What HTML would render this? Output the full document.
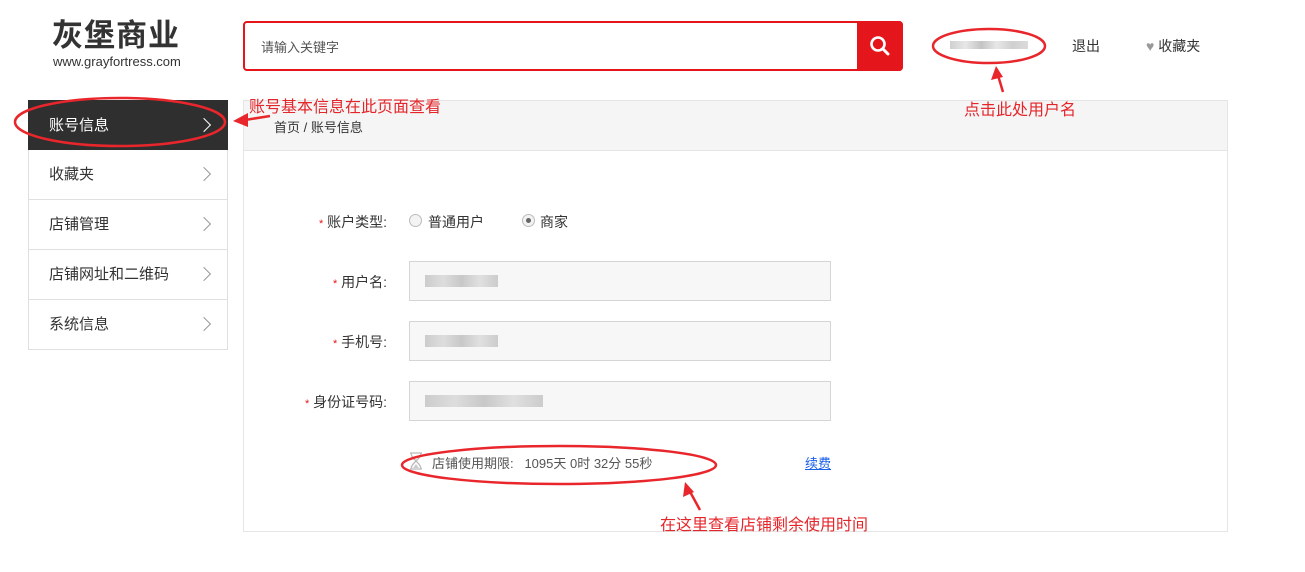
<!DOCTYPE html>
<html><head><meta charset="utf-8"><style>
*{margin:0;padding:0;box-sizing:border-box}
body{width:1305px;height:572px;background:#fff;font-family:"Liberation Sans","Noto Sans CJK SC",sans-serif;position:relative;overflow:hidden;color:#333}
.a{position:absolute}
.logo{left:52px;top:14px;font-size:31px;font-weight:bold;color:#333;letter-spacing:1px;line-height:44px}
.url{left:53px;top:54px;font-size:13px;color:#333}
.search{left:243px;top:21px;width:660px;height:50px;border:2px solid #e4161b;border-radius:4px}
.sbtn{left:857px;top:21px;width:46px;height:50px;background:#e4161b;border-radius:0 4px 4px 0}
.side{left:28px;top:100px;width:200px}
.side div{height:50px;border:1px solid #e0e0e0;border-top:none;font-size:15px;line-height:49px;padding-left:20px;position:relative;color:#333}
.side div:first-child{background:#2f2f2f;color:#fff;border-color:#2f2f2f}
.side div::after{content:"";position:absolute;right:18px;top:19px;width:9px;height:9px;border-right:1.5px solid #999;border-top:1.5px solid #999;transform:rotate(45deg)}
.side div:first-child::after{border-color:#fff}
.main{left:243px;top:100px;width:985px;height:432px;border:1px solid #e5e5e5}
.bc{height:50px;background:#f5f5f5;border-bottom:1px solid #e5e5e5;font-size:13px;padding:16px 0 0 30px}
.lbl{font-size:14px;text-align:right;width:120px;left:267px}
.lbl b{color:#e4161b;font-weight:normal;font-size:11px}
.inp{left:409px;width:422px;height:40px;background:#f7f7f7;border:1px solid #d5d5d5}
.blur{position:absolute;left:15px;top:13px;height:12px;background:linear-gradient(90deg,#ccc,#ddd,#c8c8c8,#e0e0e0,#ccc)}
.red{color:#e4262b;font-size:16px}
</style></head><body>
<div class="a logo">灰堡商业</div>
<div class="a url">www.grayfortress.com</div>
<div class="a search"><span style="position:absolute;left:16px;top:14px;font-size:13px;color:#555">请输入关键字</span></div>
<div class="a sbtn"><svg width="46" height="50"><circle cx="21" cy="23" r="6.5" fill="none" stroke="#fff" stroke-width="2.6"/><line x1="26" y1="28" x2="31" y2="33" stroke="#fff" stroke-width="3" stroke-linecap="round"/></svg></div>
<div class="a" style="left:950px;top:41px;width:78px;height:8px;background:linear-gradient(90deg,#bbb,#ddd,#aaa,#ddd,#bbb,#ccc);opacity:.7"></div>
<div class="a" style="left:1072px;top:36px;font-size:14px">退出</div>
<div class="a" style="left:1146px;top:36px;font-size:14px"><span style="color:#999">♥</span> 收藏夹</div>
<div class="a side"><div style="border-top:1px solid #2f2f2f">账号信息</div><div>收藏夹</div><div>店铺管理</div><div>店铺网址和二维码</div><div>系统信息</div></div>
<div class="a main"><div class="bc">首页 / 账号信息</div></div>
<div class="a lbl" style="top:212px"><b>*</b> 账户类型:</div>
<div class="a" style="left:409px;top:214px;width:13px;height:13px;border:1px solid #bbb;border-radius:50%;background:#f3f3f3"></div>
<div class="a" style="left:428px;top:212px;font-size:14px">普通用户</div>
<div class="a" style="left:522px;top:214px;width:13px;height:13px;border:1px solid #bbb;border-radius:50%;background:#f3f3f3"><div style="margin:3px;width:5px;height:5px;border-radius:50%;background:#666"></div></div>
<div class="a" style="left:540px;top:212px;font-size:14px">商家</div>
<div class="a lbl" style="top:272px"><b>*</b> 用户名:</div>
<div class="a inp" style="top:261px"><div class="blur" style="width:73px"></div></div>
<div class="a lbl" style="top:332px"><b>*</b> 手机号:</div>
<div class="a inp" style="top:321px"><div class="blur" style="width:73px"></div></div>
<div class="a lbl" style="top:392px"><b>*</b> 身份证号码:</div>
<div class="a inp" style="top:381px"><div class="blur" style="width:118px"></div></div>
<svg class="a" style="left:409px;top:452px" width="14" height="18"><path d="M1 1H13M1 17H13M2 1C2 7 12 11 12 17M12 1C12 7 2 11 2 17" fill="none" stroke="#bbb" stroke-width="1.3"/><path d="M4 16L7 12L10 16Z" fill="#ccc"/></svg>
<div class="a" style="left:432px;top:453px;font-size:13px;color:#555">店铺使用期限:&nbsp;&nbsp; 1095天 0时 32分 55秒</div>
<div class="a" style="left:805px;top:453px;font-size:13px;color:#1a5fe8;text-decoration:underline">续费</div>
<div class="a red" style="left:249px;top:93px">账号基本信息在此页面查看</div>
<div class="a red" style="left:964px;top:96px">点击此处用户名</div>
<div class="a red" style="left:660px;top:511px">在这里查看店铺剩余使用时间</div>
<svg class="a" style="left:0;top:0" width="1305" height="572">
<g fill="none" stroke="#e8262b" stroke-width="2.5">
<ellipse cx="120" cy="122" rx="105" ry="24"/>
<ellipse cx="989" cy="46" rx="56" ry="17"/>
<ellipse cx="559" cy="465" rx="157" ry="19"/>
<line x1="245" y1="120" x2="270" y2="116"/>
<line x1="1003" y1="92" x2="997" y2="72"/>
<line x1="700" y1="510" x2="688" y2="488"/>
</g>
<g fill="#e8262b">
<polygon points="233,121 248,113 248,127"/>
<polygon points="996,66 991,80 1003,77"/>
<polygon points="685,482 683,497 694,492"/>
</g>
</svg>
</body></html>
